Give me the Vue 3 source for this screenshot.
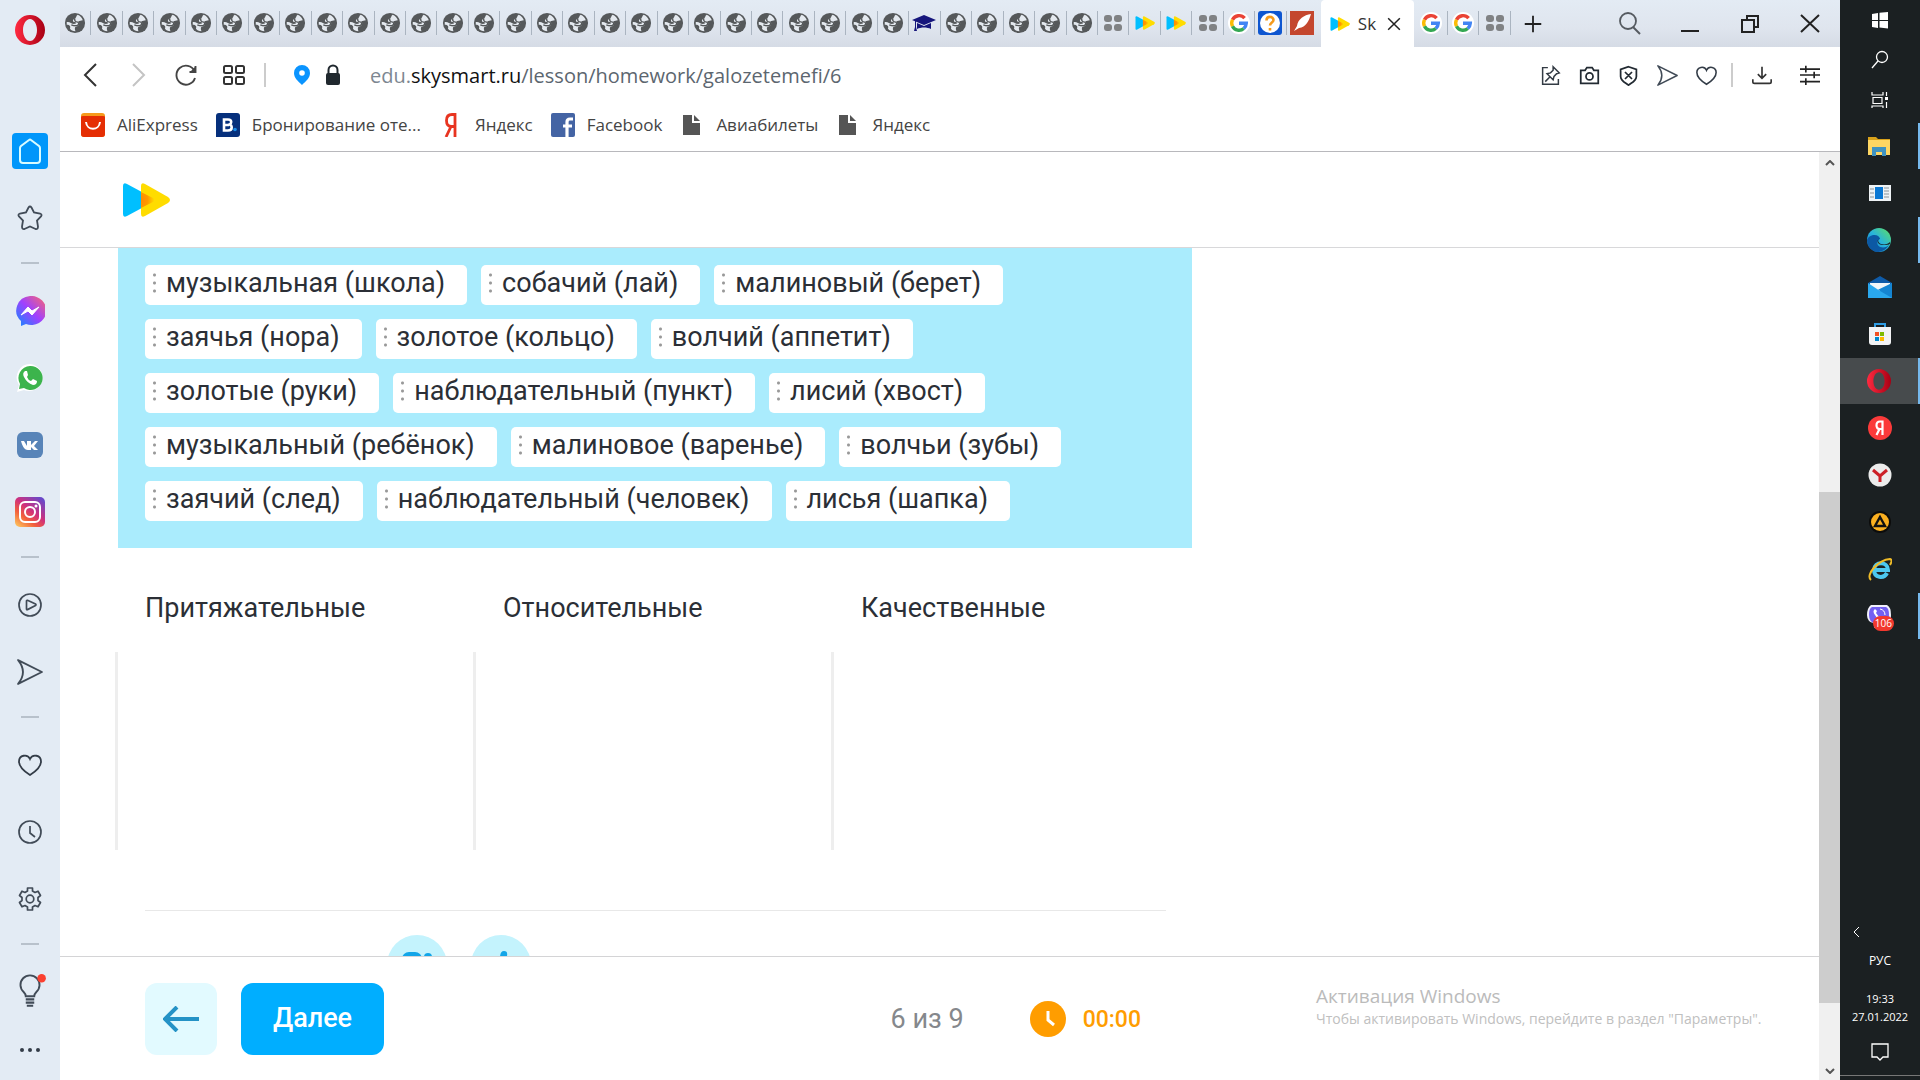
<script setup>
import { ref } from 'vue'

const globes = n => Array(n).fill('globe')

const tabs = [
  ...globes(27),
  'cap',
  ...globes(5),
  'dial', 'sky', 'sky', 'dial', 'google', 'help', 'feather'
]
const tabsAfter = ['google', 'google', 'dial']

const windowButtons = [
  { icon: 'find', title: 'Поиск' },
  { icon: 'minimize', title: 'Свернуть' },
  { icon: 'restore', title: 'Восстановить' },
  { icon: 'close', title: 'Закрыть' }
]

const pageActions = ['snap', 'camera', 'shield', 'send', 'heart']

const bookmarks = [
  { icon: 'ali', text: 'AliExpress' },
  { icon: 'booking', text: 'Бронирование оте...' },
  { icon: 'ya', text: 'Яндекс' },
  { icon: 'facebook', text: 'Facebook' },
  { icon: 'file', text: 'Авиабилеты' },
  { icon: 'file', text: 'Яндекс' }
]

const sidebar = [
  'home', 'star', '-',
  'messenger', 'whatsapp', 'vk', 'instagram', '-',
  'player', 'send', '-',
  'heart', 'clock', 'gear', '-',
  'bulb'
]

const taskbar = [
  { icon: 'explorer', open: true },
  { icon: 'news' },
  { icon: 'edge', open: true },
  { icon: 'mail' },
  { icon: 'store' },
  { icon: 'opera', open: true, active: true },
  { icon: 'yandex' },
  { icon: 'ybrowser' },
  { icon: 'aimp' },
  { icon: 'ie' },
  { icon: 'viber', open: true, badge: 106 }
]

const words = ref([
  ['музыкальная (школа)', 'собачий (лай)', 'малиновый (берет)'],
  ['заячья (нора)', 'золотое (кольцо)', 'волчий (аппетит)'],
  ['золотые (руки)', 'наблюдательный (пункт)', 'лисий (хвост)'],
  ['музыкальный (ребёнок)', 'малиновое (варенье)', 'волчьи (зубы)'],
  ['заячий (след)', 'наблюдательный (человек)', 'лисья (шапка)']
])

const groups = ref(['Притяжательные', 'Относительные', 'Качественные'])
const step = ref(6)
const total = ref(9)
const time = ref('00:00')
</script>

<template>
  <svg class="sprite" aria-hidden="true">
    <defs>
      <linearGradient id="g-opera" x1="0" x2="1"><stop offset="0" stop-color="#ff2a40" /><stop offset="1" stop-color="#a80014" /></linearGradient>
      <linearGradient id="g-mess" x1="0" y1="1" x2="1" y2="0"><stop offset="0" stop-color="#0a8cff" /><stop offset=".5" stop-color="#a040ff" /><stop offset="1" stop-color="#ff6a68" /></linearGradient>
      <linearGradient id="g-inst" x1="0" y1="1" x2=".8" y2="0"><stop offset="0" stop-color="#ffd060" /><stop offset=".35" stop-color="#f2603c" /><stop offset=".6" stop-color="#d0307c" /><stop offset="1" stop-color="#6a48c8" /></linearGradient>
      <linearGradient id="g-edge" x1="0" y1="1" x2="1" y2="0"><stop offset="0" stop-color="#0a6cc8" /><stop offset=".5" stop-color="#28b4dc" /><stop offset="1" stop-color="#60e060" /></linearGradient>
      <radialGradient id="g-sky" cx="0" cy=".5" r="1"><stop offset="0" stop-color="#ff8a00" /><stop offset=".5" stop-color="#ff9a00" /><stop offset="1" stop-color="#ffdc00" /></radialGradient>

      <symbol id="i-globe" viewBox="0 0 24 24"><circle cx="12" cy="12" r="11" fill="#55585a" /><path d="M3 11c3-1 5 2 8 2 2 0 3-1 1-2-3 0-3-3 0-4 2-1 1-3 3-4 3 1 5 4 5.500 6-2 0-3 1-5 1 2 2 1 5-2 6-2 0-2 2-1 5-3 0-5-1-6-3 1-2 0-4-3.500-4z" fill="#e4e9ef" /><path d="M12 7c-1 2 0 4 3 4 2 1 1 3-1 4-2 0-4 0-6-1" fill="none" stroke="#55585a" stroke-width="1.500" /></symbol>
      <symbol id="i-cap" viewBox="0 0 24 24"><path d="M12 4l12 5-12 5L0 9zM5 12l7 3 7-3v6c-4-2-10-2-14 0z" fill="#16167c" /><path d="M3 10v6l-1 4h3l-1-4v-6z" fill="#16167c" /></symbol>
      <symbol id="i-dial" viewBox="0 0 24 24"><g fill="#808284"><rect x="3" y="4" width="8" height="7" rx="3" /><rect x="13" y="4" width="8" height="7" rx="3" /><rect x="3" y="13" width="8" height="7" rx="3" /><rect x="13" y="13" width="8" height="7" rx="3" /></g></symbol>
      <symbol id="i-sky" viewBox="0 0 48 34"><path d="M1 3q0-4 4-2l26 14q3 2 0 4L5 33q-4 2-4-2z" fill="#00bfff" /><path d="M19 3q0-4 4-2l23 13q4 3 0 6L23 33q-4 2-4-2z" fill="#ffdc00" /><path d="M19 9l12 6q3 2 0 4l-12 6z" fill="url(#g-sky)" /></symbol>
      <symbol id="i-google" viewBox="0 0 24 24"><circle cx="12" cy="12" r="11" fill="#fff" /><g fill="none" stroke-width="3.4"><path d="M17.600 7.200A7.300 7.300 0 0 0 5.500 8.700" stroke="#ea4335" /><path d="M5.500 8.700a7.300 7.300 0 0 0 0 6.600" stroke="#fbbc05" /><path d="M5.500 15.300a7.300 7.300 0 0 0 11.300 2.200" stroke="#34a853" /><path d="M16.800 17.500A7.300 7.300 0 0 0 19.300 12.300H12" stroke="#4285f4" /></g></symbol>
      <symbol id="i-help" viewBox="0 0 24 24"><rect width="24" height="24" rx="3" fill="#0e56d0" /><circle cx="12" cy="12" r="10" fill="#fff" /><path d="M8.500 9.500c0-5 7-4.500 7-.5 0 2.500-3.500 2.500-3.500 5.500M12 17v2.500" fill="none" stroke="#f59a1c" stroke-width="2.600" /></symbol>
      <symbol id="i-feather" viewBox="0 0 24 24"><rect width="24" height="24" fill="#c4472e" /><path d="M21 3c-7 1-13 5-14 12l-3 5 5-3c7-1 10-7 12-14z" fill="#fff" /></symbol>
      <symbol id="i-x" viewBox="0 0 24 24"><path d="M5 5l14 14M19 5L5 19" stroke="#222" stroke-width="1.800" /></symbol>
      <symbol id="i-plus" viewBox="0 0 24 24"><path d="M12 3v18M3 12h18" stroke="#222" stroke-width="2" /></symbol>
      <symbol id="i-find" viewBox="0 0 24 24"><circle cx="10" cy="9" r="8" fill="none" stroke="#555a60" stroke-width="1.800" /><path d="M15 15l7 7" stroke="#555a60" stroke-width="2" /></symbol>
      <symbol id="i-minimize" viewBox="0 0 24 24"><path d="M3 19h18" stroke="#222" stroke-width="2" /></symbol>
      <symbol id="i-restore" viewBox="0 0 24 24"><path d="M4 8h12v12H4zM9 8V4h11v11h-4" fill="none" stroke="#222" stroke-width="2" /></symbol>
      <symbol id="i-close" viewBox="0 0 24 24"><path d="M3 3l18 17M21 3L3 20" stroke="#222" stroke-width="2" /></symbol>

      <symbol id="i-back" viewBox="0 0 24 24"><path d="M18 1L7 12l11 11" fill="none" stroke="#333" stroke-width="2" /></symbol>
      <symbol id="i-forward" viewBox="0 0 24 24"><path d="M7 1l11 11L7 23" fill="none" stroke="#c4c4c4" stroke-width="2" /></symbol>
      <symbol id="i-reload" viewBox="0 0 24 24"><path d="M20.500 8A9.500 9.500 0 1 0 21 15M21.500 3v6h-6" fill="none" stroke="#444" stroke-width="1.900" /><path d="M22 3v6h-6z" fill="#444" /></symbol>
      <symbol id="i-tiles" viewBox="0 0 24 24"><g fill="none" stroke="#333" stroke-width="2"><rect x="2" y="3" width="8" height="7" rx="1.500" /><rect x="14" y="3" width="8" height="7" rx="1.500" /><rect x="2" y="14" width="8" height="7" rx="1.500" /><rect x="14" y="14" width="8" height="7" rx="1.500" /></g></symbol>
      <symbol id="i-place" viewBox="0 0 24 24"><path d="M12 2a8 8 0 0 1 8 8c0 5-4 8-8 12-4-4-8-7-8-12a8 8 0 0 1 8-8z" fill="#0a94ff" /><circle cx="12" cy="10" r="2.800" fill="#fff" /></symbol>
      <symbol id="i-lock" viewBox="0 0 24 24"><rect x="5" y="10" width="14" height="12" rx="2" fill="#20282e" /><path d="M7.500 11V7a4.500 4.500 0 0 1 9 0v4" fill="none" stroke="#20282e" stroke-width="2" /></symbol>
      <symbol id="i-snap" viewBox="0 0 24 24"><g fill="none" stroke="#333b44" stroke-width="1.700"><path d="M9 3H3v19h18v-6" /><path d="M15 2l7 7-3 1-3 3-1 4-7-7 4-1 3-3zM11.500 13.500L6 19" /></g></symbol>
      <symbol id="i-camera" viewBox="0 0 24 24"><path d="M2 6h5l2-3h6l2 3h5v15H2z" fill="none" stroke="#222a32" stroke-width="2" /><circle cx="12" cy="13" r="4" fill="none" stroke="#222a32" stroke-width="2" /></symbol>
      <symbol id="i-shield" viewBox="0 0 24 24"><path d="M12 2l9 3v8c0 5-5 7-9 10-4-3-9-5-9-10V5zM8 8l8 8M16 8l-8 8" fill="none" stroke="#222a32" stroke-width="2" /></symbol>
      <symbol id="i-send" viewBox="0 0 24 24"><path d="M1 1l22 11L1 23q9-11 0-22z" fill="none" stroke="#414b57" stroke-width="1.700" stroke-linejoin="round" /></symbol>
      <symbol id="i-heart" viewBox="0 0 24 24"><path d="M12 22C4 17 1 13 1 8.500 1 2 9.500.5 12 6c2.500-5.500 11-4 11 2.500 0 4.500-3 8.500-11 13.500z" fill="none" stroke="#333c47" stroke-width="1.800" /></symbol>
      <symbol id="i-download" viewBox="0 0 24 24"><path d="M12 2v14M7 11l5 5 5-5M1 17v3q0 2 2 2h18q2 0 2-2v-3" fill="none" stroke="#333" stroke-width="2" /></symbol>
      <symbol id="i-sliders" viewBox="0 0 24 24"><path d="M0 5h24M0 12h24M0 20h24M7 1v8M17 8v8M7 16v8" fill="none" stroke="#222" stroke-width="2" /></symbol>

      <symbol id="i-ali" viewBox="0 0 24 24"><rect width="24" height="24" rx="3" fill="#f79a1c" /><path d="M0 4q0-1 2-1h20q2 0 2 1v17q0 3-3 3H3q-3 0-3-3z" fill="#e52e04" /><path d="M5 9c1 9 13 9 14 0" fill="none" stroke="#fff" stroke-width="2" /></symbol>
      <symbol id="i-booking" viewBox="0 0 24 24"><path d="M3 0h18q3 0 3 3v18q0 3-3 3H0V3q0-3 3-3z" fill="#06307c" /><path d="M8 6.500h4q3.200 0 3.200 2.500 0 2-1.700 2.500 2.200.5 2.200 3 0 3-3.700 3H8zM8 12h5" fill="none" stroke="#fff" stroke-width="2.600" /><circle cx="19" cy="16.500" r="1.800" fill="#1a8ee8" /></symbol>
      <symbol id="i-ya" viewBox="0 0 24 24"><path d="M16 24V1.500h-3q-5.500 0-5.500 6t5 6h3.500M12 13.500L7 24" fill="none" stroke="#e83420" stroke-width="2.800" /></symbol>
      <symbol id="i-facebook" viewBox="0 0 24 24"><rect width="24" height="24" rx="2" fill="#4464a4" /><path d="M16 24V9q0-3 3-3h3M12 13h9" fill="none" stroke="#fff" stroke-width="3.200" /></symbol>
      <symbol id="i-file" viewBox="0 0 24 24"><path d="M3 2h9v8h8v12H3z" fill="#555" /><path d="M14 2l6 6h-6z" fill="#555" /></symbol>

      <symbol id="i-opera" viewBox="0 0 30 30"><path fill-rule="evenodd" d="M15 0a15 15 0 1 1 0 30 15 15 0 0 1 0-30zm0 4c-4 0-7 5-7 11s3 11 7 11 7-5 7-11-3-11-7-11z" fill="url(#g-opera)" /></symbol>
      <symbol id="i-home" viewBox="0 0 36 36"><rect width="36" height="36" rx="4" fill="#0096fa" /><path d="M8 15q0-1 1-2l8-6q1-1 2 0l8 6q1 1 1 2v12q0 3-3 3H11q-3 0-3-3z" fill="none" stroke="#d8fbff" stroke-width="2" /></symbol>
      <symbol id="i-star" viewBox="0 0 26 26"><path d="M11.500 2.500q1.500-2 3 0l2.500 5 6 1q2.500 1 1 3l-4 4 1 6q0 3-2.500 2.500L13 21.500 7.500 24Q5 24.500 5 21.500l1-6-4-4q-1.500-2 1-3l6-1z" fill="none" stroke="#414b57" stroke-width="1.800" /></symbol>
      <symbol id="i-messenger" viewBox="0 0 30 30"><path d="M15 0a15 14.500 0 1 1-4 28l-5 2v-5A15 14.500 0 0 1 15 0z" fill="url(#g-mess)" /><path d="M6 19l7-8 4 4 7-4-7 8-4-4z" fill="#fff" stroke="#fff" stroke-linejoin="round" /></symbol>
      <symbol id="i-whatsapp" viewBox="0 0 28 28"><path d="M14 0a13.500 13.500 0 1 1-6 26l-7 2 2-7A13.500 13.500 0 0 1 14 0z" fill="#fff" /><path d="M14 2a12 12 0 1 1-6 22l-5 1 1-5A12 12 0 0 1 14 2z" fill="#3cb44c" /><path d="M9 7q-3 2-1 6 3 6 9 8 4 0 4-4l-4-2-2 2q-3-1-4-4l1-2-1-4z" fill="#fff" /></symbol>
      <symbol id="i-vk" viewBox="0 0 26 26"><rect width="26" height="26" rx="6" fill="#5884b8" /><path d="M4 9h3l3 5V9h4v4l4-4h3l-4 5 4 4h-4l-3-3v3h-3C7 18 5 13 4 9z" fill="#fff" /></symbol>
      <symbol id="i-instagram" viewBox="0 0 30 30"><rect width="30" height="30" rx="5" fill="url(#g-inst)" /><g fill="none" stroke="#fff" stroke-width="2"><rect x="5" y="5" width="20" height="20" rx="5" /><circle cx="15" cy="15" r="5" /></g><circle cx="21" cy="9" r="1.500" fill="#fff" /></symbol>
      <symbol id="i-player" viewBox="0 0 24 24"><circle cx="12" cy="12" r="11" fill="none" stroke="#414b57" stroke-width="1.700" /><path d="M8.500 8q0-1 1-.7l8 3.700q1 .8 0 1.600l-8 4q-1 .4-1-.6z" fill="none" stroke="#414b57" stroke-width="1.700" /></symbol>
      <symbol id="i-clock" viewBox="0 0 24 24"><circle cx="12" cy="12" r="11" fill="none" stroke="#414b57" stroke-width="1.700" /><path d="M12 6v7l5 4" fill="none" stroke="#414b57" stroke-width="1.700" /></symbol>
      <symbol id="i-gear" viewBox="0 0 24 24"><path d="M9.500 1h5v3l2.500 1.500 3-1.300 2.500 4.300-2.500 2v3l2.500 2-2.500 4.300-3-1.300L14.500 20v3h-5v-3L7 18.500l-3 1.300-2.500-4.300 2.500-2v-3l-2.500-2L4 4.200l3 1.300L9.500 4z" fill="none" stroke="#414b57" stroke-width="1.700" stroke-linejoin="round" /><circle cx="12" cy="12" r="3.800" fill="none" stroke="#414b57" stroke-width="1.700" /></symbol>
      <symbol id="i-bulb" viewBox="0 0 30 34"><path d="M11 21q0-2-2-4a9 9 0 1 1 12 0q-2 2-2 4z" fill="none" stroke="#414b57" stroke-width="1.800" /><path d="M11 24h8M11 27h8M12 30h6" stroke="#414b57" stroke-width="2" /><circle cx="26" cy="4" r="4" fill="#fb4030" /></symbol>
      <symbol id="i-dots" viewBox="0 0 24 24"><g fill="#333c47"><circle cx="4" cy="12" r="2" /><circle cx="12" cy="12" r="2" /><circle cx="20" cy="12" r="2" /></g></symbol>

      <symbol id="i-windows" viewBox="0 0 24 24"><path d="M4 6l6-1v7H4zM11.500 4.800L20 4v8h-8.500zM4 13h6v7l-6-1zM11.500 13H20v7.500l-8.500-1z" fill="#fff" /></symbol>
      <symbol id="i-search" viewBox="0 0 24 24"><circle cx="14" cy="9" r="5.500" fill="none" stroke="#fff" stroke-width="1.300" /><path d="M10 13l-6 7" stroke="#fff" stroke-width="1.300" /></symbol>
      <symbol id="i-views" viewBox="0 0 24 24"><path d="M4 4v3h11V4M5 9.500h9v6H5zM4 20v-2h11v2M18.500 4v4M18.500 14v6" fill="none" stroke="#fff" stroke-width="1.200" /><path d="M17 9h3v3h-3z" fill="#fff" /></symbol>
      <symbol id="i-explorer" viewBox="0 0 24 24"><path d="M1 3h8l2 2h12v16H1z" fill="#d9a21b" /><path d="M1 6h22v15H1z" fill="#fdd663" /><path d="M5 13h14v9h-4v-4H9v4H5z" fill="#3f92c0" /></symbol>
      <symbol id="i-news" viewBox="0 0 24 24"><rect x="1" y="4" width="22" height="16" fill="#eef3f6" /><rect x="7" y="6" width="8" height="12" fill="#0a78d4" /><path d="M2 8h4M2 12h4M2 16h4M16 7h5M16 10h5M16 13h5M16 16h5" stroke="#8a949a" /></symbol>
      <symbol id="i-edge" viewBox="0 0 24 24"><circle cx="12" cy="12" r="12" fill="url(#g-edge)" /><path d="M0 12c2-6 12-7 13-1-3 1-4 6 0 8 4 1 7 0 9-2-3 5-8 7-12 7C4 23 0 18 0 12z" fill="#0c59a4" /><path d="M13 10c-3 1-2 5 1 6 4 1 7 0 9-2 1 3-3 3-7 3-6 0-7-5-3-7z" fill="#1b2022" /></symbol>
      <symbol id="i-mail" viewBox="0 0 24 24"><path d="M0 8l12-7 12 7v4H0z" fill="#0f5ba8" /><path d="M2 8h20v8H2z" fill="#f2f6f8" /><path d="M0 8l12 8 12-8v15H0z" fill="#2aa8ee" /><path d="M24 8v15L10 14.700z" fill="#1585d2" /></symbol>
      <symbol id="i-store" viewBox="0 0 24 24"><path d="M7 6V2h10v4" fill="none" stroke="#2f9ce4" stroke-width="2" /><path d="M1 5h22v15q0 3-3 3H4q-3 0-3-3z" fill="#f2f3f5" /><path d="M7 10h4v4H7z" fill="#f25022" /><path d="M12 10h4v4h-4z" fill="#7fba00" /><path d="M7 15h4v4H7z" fill="#0088cc" /><path d="M12 15h4v4h-4z" fill="#ffb900" /></symbol>
      <symbol id="i-yandex" viewBox="0 0 24 24"><circle cx="12" cy="12" r="12" fill="#fb3a3a" /><path d="M14.500 19V5.500H12q-3.500 0-3.500 3.800t3.500 3.700h2.500M11.500 13L8.500 19" fill="none" stroke="#fff" stroke-width="2.200" /></symbol>
      <symbol id="i-ybrowser" viewBox="0 0 24 24"><circle cx="12" cy="12" r="11.500" fill="#ececec" /><path d="M5 7l7 6 7-6M12 12v7" fill="none" stroke="#cc1f26" stroke-width="3" /></symbol>
      <symbol id="i-aimp" viewBox="0 0 24 24"><circle cx="12" cy="12" r="11" fill="#0c0c0c" /><circle cx="12" cy="12" r="9" fill="#fbb020" /><path d="M12 7l5 9H7z" fill="none" stroke="#111" stroke-width="2.400" /></symbol>
      <symbol id="i-ie" viewBox="0 0 24 24"><path d="M19 16c-3 6-13 5-13-3 0-9 14-9 14 0H8" fill="none" stroke="#4cc8f0" stroke-width="4" /><path d="M3 23C-3 18 10 3 22 2c3 1 1 4 0 6" fill="none" stroke="#f0bc28" stroke-width="2" /></symbol>
      <symbol id="i-viber" viewBox="0 0 24 24"><path d="M4 1h16q4 2 4 10t-4 9h-8l-5 4v-5q-7-1-7-8T4 1z" fill="#f1f0fc" /><path d="M5 3h14q3 1 3 8t-3 8h-8l-3 3v-3q-6-1-6-8t3-8z" fill="#7360f2" /><path d="M8 5q-3 2 0 6 3 5 7 6l2-2-3-3-2 1-3-4 1-2z" fill="#fff" /><path d="M13 5q5 1 5 6" fill="none" stroke="#fff" /></symbol>
      <symbol id="i-notice" viewBox="0 0 24 24"><path d="M4 4h16v13h-5l-3 3-3-3H4z" fill="none" stroke="#fff" stroke-width="1.300" /></symbol>
    </defs>
  </svg>

  <div class="desktop">
    <nav class="sidebar">
      <button class="opera"><svg><use href="#i-opera" /></svg></button>
      <template v-for="(item, i) in sidebar" :key="i">
        <hr v-if="item == '-'">
        <button v-else :class="item"><svg><use :href="'#i-' + item" /></svg></button>
      </template>
      <button class="more"><svg><use href="#i-dots" /></svg></button>
    </nav>

    <div class="browser">
      <div class="tabbar">
        <div class="tabs">
          <button v-for="(tab, i) in tabs" :key="i" class="tab"><svg :class="tab"><use :href="'#i-' + tab" /></svg></button>
        </div>
        <div class="tab-active">
          <svg class="sky"><use href="#i-sky" /></svg>
          <span>Sk</span>
          <button><svg><use href="#i-x" /></svg></button>
        </div>
        <div class="tabs tabs-after">
          <button v-for="(tab, i) in tabsAfter" :key="i" class="tab"><svg :class="tab"><use :href="'#i-' + tab" /></svg></button>
        </div>
        <button class="new-tab"><svg><use href="#i-plus" /></svg></button>
        <div class="window-buttons">
          <button v-for="b in windowButtons" :key="b.icon" :aria-label="b.title"><svg><use :href="'#i-' + b.icon" /></svg></button>
        </div>
      </div>

      <div class="toolbar">
        <div class="nav-buttons">
          <button><svg><use href="#i-back" /></svg></button>
          <button><svg><use href="#i-forward" /></svg></button>
          <button><svg><use href="#i-reload" /></svg></button>
          <button><svg><use href="#i-tiles" /></svg></button>
        </div>
        <i class="split"></i>
        <div class="site-info">
          <svg><use href="#i-place" /></svg>
          <svg><use href="#i-lock" /></svg>
        </div>
        <button class="url">edu.<b>skysmart.ru</b><span>/lesson/homework/galozetemefi/6</span></button>
        <div class="page-actions">
          <button v-for="a in pageActions" :key="a"><svg><use :href="'#i-' + a" /></svg></button>
        </div>
        <i class="split"></i>
        <div class="tools">
          <button><svg><use href="#i-download" /></svg></button>
          <button><svg><use href="#i-sliders" /></svg></button>
        </div>
      </div>

      <div class="bookmarks">
        <a v-for="(b, i) in bookmarks" :key="i" href="#"><svg><use :href="'#i-' + b.icon" /></svg>{{ b.text }}</a>
      </div>

      <div class="view">
        <div class="page">
          <header class="page-header">
            <a href="#" aria-label="Skysmart"><svg><use href="#i-sky" /></svg></a>
          </header>

          <main class="lesson">
            <section class="words">
              <div v-for="(row, i) in words" :key="i" class="word-row">
                <button v-for="word in row" :key="word" class="word"><i class="grip"></i>{{ word }}</button>
              </div>
            </section>
            <section class="groups">
              <div v-for="group in groups" :key="group" class="group">
                <h2>{{ group }}</h2>
                <div class="drop"></div>
              </div>
            </section>
            <hr class="line">
            <div class="reactions">
              <button>
                <svg viewBox="0 0 60 60"><rect x="15" y="17" width="20" height="26" rx="7" /><circle cx="41" cy="22" r="4" /></svg>
              </button>
              <button>
                <svg viewBox="0 0 60 60"><path d="M29 32v-9q0-7 4-7t3 5l-1 8h8v15H24V32z" /></svg>
              </button>
            </div>
          </main>

          <footer class="page-footer">
            <div class="controls">
              <button class="prev" aria-label="Назад">
                <svg viewBox="0 0 36 26"><path d="M36 13H2M14 1L2 13l12 12" /></svg>
              </button>
              <button class="next">Далее</button>
              <span class="counter">{{ step }} из {{ total }}</span>
              <span class="timer">
                <svg viewBox="0 0 36 36"><circle cx="18" cy="18" r="18" /><path d="M18 10v9l6 5" /></svg>
                {{ time }}
              </span>
            </div>
            <div class="activation">
              <p class="activation-title">Активация Windows</p>
              <p>Чтобы активировать Windows, перейдите в раздел "Параметры".</p>
            </div>
          </footer>
        </div>

        <div class="scrollbar">
          <svg viewBox="0 0 10 6"><path d="M1 5l4-4 4 4" /></svg>
          <div class="track"><div class="thumb"></div></div>
          <svg viewBox="0 0 10 6"><path d="M1 1l4 4 4-4" /></svg>
        </div>
      </div>
    </div>

    <aside class="taskbar">
      <div class="system">
        <button><svg><use href="#i-windows" /></svg></button>
        <button><svg><use href="#i-search" /></svg></button>
        <button><svg><use href="#i-views" /></svg></button>
      </div>
      <div class="programs">
        <button v-for="p in taskbar" :key="p.icon" :class="{ open: p.open, active: p.active }">
          <svg><use :href="'#i-' + p.icon" /></svg>
          <span v-if="p.badge" class="badge">{{ p.badge }}</span>
        </button>
      </div>
      <div class="tray">
        <button class="tray-more"><svg viewBox="0 0 8 12"><path d="M7 1L2 6l5 5" /></svg></button>
        <span class="lang">РУС</span>
        <time>19:33<br>27.01.2022</time>
        <button class="notice"><svg><use href="#i-notice" /></svg></button>
      </div>
    </aside>
  </div>
</template>

<style>
body {
  margin: 0;
  background: #fff;
}
</style>

<style scoped>
* {
  box-sizing: border-box;
}
.sprite {
  position: absolute;
  width: 0;
  height: 0;
}
button {
  display: flex;
  align-items: center;
  justify-content: center;
  padding: 0;
  border: 0;
  background: none;
  font: inherit;
  color: inherit;
  cursor: pointer;
}
svg {
  display: block;
  flex: none;
  width: 24px;
  height: 24px;
}
hr {
  margin: 0;
  border: 0;
}
.desktop {
  display: flex;
  height: 100vh;
  overflow: hidden;
  font-family: "Open Sans", "Noto Sans", sans-serif;
}

/* opera sidebar */
.sidebar {
  display: flex;
  flex-direction: column;
  align-items: center;
  gap: 22px;
  width: 60px;
  flex: none;
  background: #e3ebf4;
}
.sidebar button {
  width: 60px;
  height: 45px;
  flex: none;
}
.sidebar hr {
  width: 18px;
  height: 4px;
  flex: none;
  border-top: 2px solid #b8c1cb;
}
.sidebar .opera {
  height: 60px;
  margin-bottom: 46px;
}
.opera svg,
.messenger svg,
.instagram svg {
  width: 30px;
  height: 30px;
}
.home svg {
  width: 36px;
  height: 36px;
}
.star svg,
.vk svg,
.sidebar .send svg {
  width: 26px;
  height: 26px;
}
.whatsapp svg {
  width: 28px;
  height: 28px;
}
.bulb svg {
  width: 32px;
  height: 36px;
}
.sidebar .more {
  height: 28px;
}

.browser {
  display: flex;
  flex-direction: column;
  flex: 1;
  min-width: 0;
}

/* tabs */
.tabbar {
  display: flex;
  height: 47px;
  flex: none;
  background: linear-gradient(#e3ebf4, #dfe5ee 60%, #d5dbe5);
}
.tabs {
  display: flex;
  flex: 1;
  align-items: center;
  padding: 0 3px 2px 0;
}
.tab {
  flex: 1;
  min-width: 0;
  height: 24px;
  border-right: 1px solid #aab4c0;
}
.tab:last-child {
  border-color: transparent;
}
.tabs-after .tab:last-child {
  border-color: #aab4c0;
}
.tab .globe {
  width: 22px;
  height: 22px;
}
.tab .sky,
.tab-active .sky {
  width: 20px;
  height: 14px;
}
.tab-active {
  display: flex;
  align-items: center;
  justify-content: space-between;
  width: 93px;
  padding: 0 10px 0 9px;
  border-radius: 4px 4px 0 0;
  background: #fff;
  font-size: 17px;
  color: #333;
}
.tab-active button svg {
  width: 20px;
  height: 20px;
}
.tabs-after {
  flex: none;
  width: 97px;
  padding: 0 0 2px 2px;
}
.new-tab {
  width: 44px;
}
.new-tab svg {
  width: 22px;
  height: 22px;
}
.window-buttons {
  display: flex;
  margin-left: 45px;
}
.window-buttons button {
  width: 60px;
}

/* address bar */
.toolbar {
  display: flex;
  align-items: center;
  height: 56px;
  flex: none;
  padding: 0 12px 0 6px;
}
.nav-buttons {
  display: flex;
  margin-right: 6px;
}
.nav-buttons button {
  width: 48px;
  height: 48px;
}
.split {
  width: 2px;
  height: 24px;
  background: #ccc;
}
.site-info {
  display: flex;
  gap: 7px;
  margin: 0 25px 0 24px;
}
.url {
  flex: 1;
  justify-content: flex-start;
  font-size: 20px;
  color: #7d8791;
}
.url b {
  font-weight: 400;
  color: #111;
}
.url span {
  color: #5c666f;
}
.page-actions {
  display: flex;
}
.page-actions button {
  width: 39px;
  height: 39px;
}
.page-actions svg {
  width: 21px;
  height: 21px;
}
.page-actions + .split {
  margin-left: 5px;
}
.tools {
  display: flex;
  gap: 12px;
  margin-left: 11px;
}
.tools button {
  width: 36px;
  height: 36px;
}
.tools svg {
  width: 20px;
  height: 20px;
}

.bookmarks {
  display: flex;
  gap: 18px;
  height: 49px;
  flex: none;
  padding: 0 21px 5px;
  border-bottom: 1px solid #b8b8bc;
}
.bookmarks a {
  display: flex;
  align-items: center;
  gap: 12px;
  font-size: 17px;
  color: #444;
  text-decoration: none;
}

/* page */
.view {
  display: flex;
  flex: 1;
  min-height: 0;
}
.page {
  display: flex;
  flex-direction: column;
  flex: 1;
  min-width: 0;
  font-family: Roboto, "Open Sans", sans-serif;
  color: #2b2f36;
}
.page-header {
  display: flex;
  align-items: center;
  height: 96px;
  flex: none;
  padding-left: 62px;
  border-bottom: 1px solid #d8d8da;
}
.page-header svg {
  width: 48px;
  height: 34px;
}
.lesson {
  flex: 1;
  min-height: 0;
  overflow: hidden;
  padding-left: 58px;
}
.words {
  display: flex;
  flex-direction: column;
  gap: 14px;
  max-width: 1074px;
  padding: 17px 27px 27px;
  background: #aaecfd;
}
.word-row {
  display: flex;
  gap: 14px;
}
.word {
  height: 40px;
  padding: 0 22px 4px 8px;
  border-radius: 5px;
  background: #fff;
  font-size: 27px;
  white-space: nowrap;
}
.grip {
  width: 3px;
  height: 24px;
  margin-right: 10px;
  background: radial-gradient(circle, #999 1px, transparent 2px) 0 0 / 3px 8px;
}
.groups {
  display: grid;
  grid-template-columns: repeat(3, 1fr);
  max-width: 1074px;
  margin: 42px 0 60px -3px;
}
.group h2 {
  margin: 0 0 26px;
  padding-left: 30px;
  font-size: 27px;
  font-weight: 400;
  line-height: 36px;
}
.drop {
  height: 198px;
  border-left: 3px solid #eee;
}
.line {
  max-width: 1021px;
  height: 1px;
  margin-left: 27px;
  background: #e8e8e8;
}
.reactions {
  display: flex;
  gap: 24px;
  margin: 24px 0 0 269px;
}
.reactions button {
  width: 60px;
  height: 60px;
  border-radius: 50%;
  background: #c4f3fd;
}
.reactions svg {
  width: 60px;
  height: 60px;
  fill: #12a5e8;
}

.page-footer {
  display: flex;
  height: 124px;
  flex: none;
  padding: 26px 48px 0 85px;
  border-top: 1px solid #d4d4d6;
}
.controls {
  display: flex;
  align-items: center;
  width: 996px;
  height: 72px;
}
.prev {
  width: 72px;
  height: 72px;
  margin-right: 24px;
  border-radius: 12px;
  background: #e2faff;
}
.prev svg {
  width: 36px;
  height: 26px;
  fill: none;
  stroke: #2492c6;
  stroke-width: 4;
}
.next {
  width: 143px;
  height: 72px;
  padding-bottom: 2px;
  border-radius: 12px;
  background: #00aeff;
  font-size: 27px;
  font-weight: 500;
  color: #fff;
}
.counter {
  margin-left: auto;
  font-size: 27px;
  color: #85888c;
}
.timer {
  display: flex;
  align-items: center;
  gap: 17px;
  margin-left: 66px;
  font-size: 23px;
  font-weight: 500;
  color: #ff9d00;
}
.timer svg {
  width: 36px;
  height: 36px;
  fill: #ff9d00;
}
.timer path {
  fill: none;
  stroke: #fff;
  stroke-width: 3;
}
.activation {
  margin-left: 175px;
  font-family: "Open Sans", sans-serif;
  font-size: 14px;
  line-height: 20px;
  white-space: nowrap;
  color: #c0c0c0;
}
.activation p {
  margin: 0;
}
.activation .activation-title {
  font-size: 19px;
  line-height: 26px;
  color: #bbb;
}

.scrollbar {
  display: flex;
  flex-direction: column;
  align-items: center;
  width: 21px;
  flex: none;
  padding: 8px 0 6px;
  background: #f0f0f0;
}
.scrollbar svg {
  width: 10px;
  height: 6px;
  fill: none;
  stroke: #555;
  stroke-width: 2;
}
.track {
  flex: 1;
  width: 100%;
}
.thumb {
  height: 511px;
  margin-top: 326px;
  background: #cdcdcd;
}

/* windows taskbar */
.taskbar {
  display: flex;
  flex-direction: column;
  width: 80px;
  flex: none;
  background: #1b2022;
  color: #fff;
}
.taskbar button {
  width: 80px;
}
.system button {
  height: 40px;
}
.programs {
  display: flex;
  flex-direction: column;
  gap: 1px;
  margin-top: 3px;
}
.programs button {
  position: relative;
  height: 46px;
}
.programs .open {
  border-right: 2px solid #76b9ed;
}
.programs .active {
  background: #474b4d;
}
.badge {
  position: absolute;
  right: 24px;
  bottom: 8px;
  padding: 0 2px;
  border-radius: 8px;
  background: #f2382e;
  font-size: 10px;
  line-height: 15px;
}
.tray {
  display: flex;
  flex-direction: column;
  align-items: center;
  margin: auto 0 4px;
  padding-bottom: 11px;
  border-bottom: 1px solid #777;
  font-size: 12px;
  line-height: 18px;
  text-align: center;
}
.tray svg {
  width: 24px;
  height: 24px;
}
.tray time {
  font-size: 11px;
}
.tray .tray-more {
  justify-content: flex-start;
  padding-left: 12px;
  margin-bottom: 14px;
}
.tray .tray-more svg {
  width: 8px;
  height: 12px;
  fill: none;
  stroke: #fff;
}
.lang {
  margin-bottom: 20px;
}
.notice {
  margin-top: 14px;
}
</style>
